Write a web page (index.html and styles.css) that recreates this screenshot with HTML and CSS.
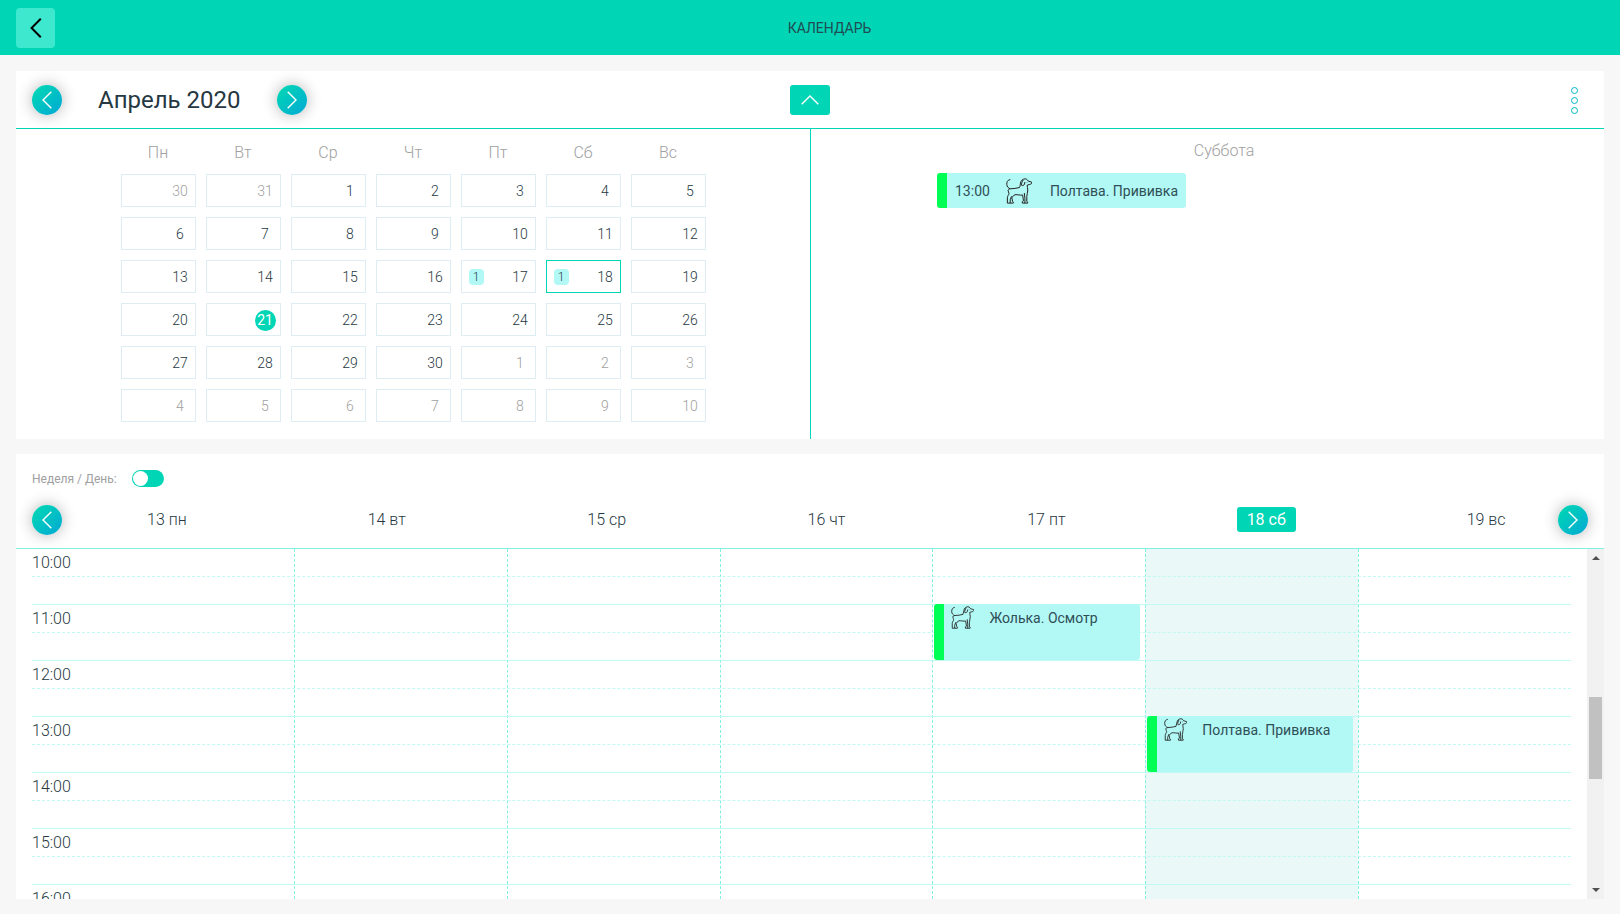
FILE: index.html
```
<!DOCTYPE html>
<html lang="ru">
<head>
  <meta charset="UTF-8">
  <meta name="viewport" content="width=device-width, initial-scale=1">
  <title>Календарь</title>
  <link rel="stylesheet" href="styles.css">
</head>
<body>

  <svg class="sprite" aria-hidden="true">
    <symbol id="icon-left" viewBox="0 0 10 18"><path d="M9.300 .7 1 9l8.300 8.300"/></symbol>
    <symbol id="icon-right" viewBox="0 0 10 18"><path d="M.7 .7 9 9 .7 17.300"/></symbol>
    <symbol id="icon-up" viewBox="0 0 18 10"><path d="M.7 9.300 9 1l8.300 8.300"/></symbol>
    <symbol id="icon-dog" viewBox="0 0 26 26">
      <path d="M4.300 1.500C1.500 2 .6 4 .8 6.500c.1 2.200 1.500 3.600 3.500 4.300 3.200-.3 6.500-.4 9.200-1.300C14.500 8 14 5.500 15 3.500 15.900 1.500 18.500.2 20.500 1.200c1 .5 1.300 1.500 1.600 1.800l3.600 1.200c.3 1.500-.9 2.200-2.300 2.300l-2.200.7c-.2 1.500.6 3 .6 4.800 0 2.500-1 4.200-1 6.500v5l.9.6v1h-5.300l-.2-1.500 1.300-.8-.9-5.800c-2.600.5-5-.6-7.600-.3-1.500 1-3 2-3.200 3.300l.8 3.400.7.7v1H1.400v-5.300C1.400 17.700 3 16.500 3 15.500c0-1-1-2-.9-3.100.1-.8.8-1.500 2.200-1.600"/>
      <path d="M17.300 2c-1.300 1.500-2 3.500-1.700 5.300 1.200.6 2.300.2 2.900-1.200l.4-2.100M18.300 15l.6 5.500v4.600M4.200 25v-3.200l1.300-3.500M21 4.200v.4"/>
    </symbol>
  </svg>

  <header class="topbar">
    <button type="button" class="back" aria-label="Назад"><svg class="chevron"><use href="#icon-left"/></svg></button>
    <h1>КАЛЕНДАРЬ</h1>
  </header>

  <main>
    <section class="panel month">
      <div class="month-header">
        <div class="month-nav">
          <button type="button" class="round" aria-label="Предыдущий месяц"><svg class="chevron"><use href="#icon-left"/></svg></button>
          <h2>Апрель 2020</h2>
          <button type="button" class="round" aria-label="Следующий месяц"><svg class="chevron"><use href="#icon-right"/></svg></button>
        </div>
        <button type="button" class="collapse" aria-label="Свернуть"><svg class="chevron-up"><use href="#icon-up"/></svg></button>
        <button type="button" class="more" aria-label="Меню"><i></i><i></i><i></i></button>
      </div>

      <div class="month-body">
        <div class="month-days">
          <table class="days">
            <thead>
              <tr><th>Пн</th><th>Вт</th><th>Ср</th><th>Чт</th><th>Пт</th><th>Сб</th><th>Вс</th></tr>
            </thead>
            <tbody>
              <tr>
                <td><button type="button" class="day other"><span>30</span></button></td>
                <td><button type="button" class="day other"><span>31</span></button></td>
                <td><button type="button" class="day"><span>1</span></button></td>
                <td><button type="button" class="day"><span>2</span></button></td>
                <td><button type="button" class="day"><span>3</span></button></td>
                <td><button type="button" class="day"><span>4</span></button></td>
                <td><button type="button" class="day"><span>5</span></button></td>
              </tr>
              <tr>
                <td><button type="button" class="day"><span>6</span></button></td>
                <td><button type="button" class="day"><span>7</span></button></td>
                <td><button type="button" class="day"><span>8</span></button></td>
                <td><button type="button" class="day"><span>9</span></button></td>
                <td><button type="button" class="day"><span>10</span></button></td>
                <td><button type="button" class="day"><span>11</span></button></td>
                <td><button type="button" class="day"><span>12</span></button></td>
              </tr>
              <tr>
                <td><button type="button" class="day"><span>13</span></button></td>
                <td><button type="button" class="day"><span>14</span></button></td>
                <td><button type="button" class="day"><span>15</span></button></td>
                <td><button type="button" class="day"><span>16</span></button></td>
                <td><button type="button" class="day"><b>1</b><span>17</span></button></td>
                <td><button type="button" class="day selected"><b>1</b><span>18</span></button></td>
                <td><button type="button" class="day"><span>19</span></button></td>
              </tr>
              <tr>
                <td><button type="button" class="day"><span>20</span></button></td>
                <td><button type="button" class="day today"><span>21</span></button></td>
                <td><button type="button" class="day"><span>22</span></button></td>
                <td><button type="button" class="day"><span>23</span></button></td>
                <td><button type="button" class="day"><span>24</span></button></td>
                <td><button type="button" class="day"><span>25</span></button></td>
                <td><button type="button" class="day"><span>26</span></button></td>
              </tr>
              <tr>
                <td><button type="button" class="day"><span>27</span></button></td>
                <td><button type="button" class="day"><span>28</span></button></td>
                <td><button type="button" class="day"><span>29</span></button></td>
                <td><button type="button" class="day"><span>30</span></button></td>
                <td><button type="button" class="day other"><span>1</span></button></td>
                <td><button type="button" class="day other"><span>2</span></button></td>
                <td><button type="button" class="day other"><span>3</span></button></td>
              </tr>
              <tr>
                <td><button type="button" class="day other"><span>4</span></button></td>
                <td><button type="button" class="day other"><span>5</span></button></td>
                <td><button type="button" class="day other"><span>6</span></button></td>
                <td><button type="button" class="day other"><span>7</span></button></td>
                <td><button type="button" class="day other"><span>8</span></button></td>
                <td><button type="button" class="day other"><span>9</span></button></td>
                <td><button type="button" class="day other"><span>10</span></button></td>
              </tr>
            </tbody>
          </table>
        </div>

        <div class="day-events">
          <h3>Суббота</h3>
          <div class="event">
            <time>13:00</time>
            <svg class="dog"><use href="#icon-dog"/></svg>
            <span>Полтава. Прививка</span>
          </div>
        </div>
      </div>
    </section>

    <section class="panel week">
      <div class="mode">
        <label for="mode">Неделя / День:</label>
        <input type="checkbox" id="mode" class="switch">
      </div>

      <div class="week-header">
        <button type="button" class="round prev" aria-label="Предыдущая неделя"><svg class="chevron"><use href="#icon-left"/></svg></button>
        <div><span>13 пн</span></div>
        <div><span>14 вт</span></div>
        <div><span>15 ср</span></div>
        <div><span>16 чт</span></div>
        <div><span>17 пт</span></div>
        <div><span class="current">18 сб</span></div>
        <div><span>19 вс</span></div>
        <button type="button" class="round next" aria-label="Следующая неделя"><svg class="chevron"><use href="#icon-right"/></svg></button>
      </div>

      <div class="week-body">
        <div class="schedule">
          <div class="columns">
            <div class="column"></div>
            <div class="column"></div>
            <div class="column"></div>
            <div class="column"></div>
            <div class="column"></div>
            <div class="column current"></div>
            <div class="column"></div>
          </div>
          <div class="hours">
            <div class="hour">10:00</div>
            <div class="hour">11:00</div>
            <div class="hour">12:00</div>
            <div class="hour">13:00</div>
            <div class="hour">14:00</div>
            <div class="hour">15:00</div>
            <div class="hour">16:00</div>
          </div>
          <div class="columns">
            <div class="event" style="--day: 5; --start: 1">
              <svg class="dog"><use href="#icon-dog"/></svg>
              <span>Жолька. Осмотр</span>
            </div>
            <div class="event" style="--day: 6; --start: 3">
              <svg class="dog"><use href="#icon-dog"/></svg>
              <span>Полтава. Прививка</span>
            </div>
          </div>
        </div>
        <div class="scrollbar">
          <i class="arrow-up"></i>
          <div class="track"><div class="thumb"></div></div>
          <i class="arrow-down"></i>
        </div>
      </div>
    </section>
  </main>

</body>
</html>
```
FILE: styles.css
```
* {
  box-sizing: border-box;
}

body {
  margin: 0;
  height: 100vh;
  display: flex;
  flex-direction: column;
  background: #f7f7f7;
  color: #263842;
  font-family: Roboto, sans-serif;
  font-size: 16px;
  font-weight: 300;
}

h1, h2, h3 {
  margin: 0;
  font-weight: 400;
}

button {
  padding: 0;
  border: none;
  font: inherit;
  color: inherit;
  cursor: pointer;
}

.sprite {
  position: absolute;
  width: 0;
  height: 0;
}

.topbar {
  display: flex;
  align-items: center;
  height: 55px;
  padding: 0 16px;
  background: #00d5b5;
}

.topbar h1 {
  flex: 1;
  color: #204c52;
  font-size: 14px;
  text-align: center;
}

.back {
  display: flex;
  align-items: center;
  justify-content: center;
  width: 39px;
  height: 40px;
  border-radius: 4px;
  background: #3de8cf;
  color: #000;
}

.chevron {
  width: 10px;
  height: 18px;
  fill: none;
  stroke: currentColor;
  stroke-width: 1.4;
}

.back .chevron {
  width: 12px;
  height: 20px;
  stroke-width: 1.8;
}

.chevron-up {
  width: 18px;
  height: 10px;
  fill: none;
  stroke: currentColor;
  stroke-width: 1.4;
}

.round {
  display: flex;
  align-items: center;
  justify-content: center;
  width: 30px;
  height: 30px;
  border-radius: 50%;
  background: linear-gradient(135deg, #00d5b5 10%, #00a8d5 100%);
  box-shadow: 0 0 15px rgba(0, 0, 0, 0.3);
  color: #fff;
}

main {
  flex: 1;
  min-height: 0;
  display: flex;
  flex-direction: column;
  gap: 15px;
  padding: 16px 16px 15px;
}

.panel {
  background: #fff;
}

/* Month */
.month-header {
  display: grid;
  grid-template-columns: 1fr auto 1fr;
  align-items: center;
  height: 58px;
  padding: 1px 16px 0;
  border-bottom: 1px solid #00d5b5;
}

.month-nav {
  display: flex;
  align-items: center;
  gap: 36px;
}

.month-nav h2 {
  font-size: 24px;
  line-height: 30px;
}

.collapse {
  display: flex;
  align-items: center;
  justify-content: center;
  width: 40px;
  height: 30px;
  border-radius: 3px;
  background: #00d5b5;
  color: #fff;
}

.more {
  justify-self: end;
  display: flex;
  flex-direction: column;
  gap: 3px;
  padding: 0 10px;
  background: none;
}

.more i {
  width: 7px;
  height: 7px;
  border: 1px solid #00b8c8;
  border-radius: 50%;
}

.month-body {
  display: flex;
}

.month-days {
  width: 50%;
  padding-bottom: 7px;
}

.days {
  margin: 0 auto;
  border-spacing: 10px;
}

.days th {
  height: 25px;
  padding: 2px 0 0;
  color: #a0a0a0;
  font-weight: 300;
}

.days td {
  padding: 0;
}

.day {
  display: flex;
  align-items: center;
  width: 75px;
  height: 33px;
  padding: 1px 4px 0 7px;
  border: 1px solid #deedf4;
  background: #fff;
  font-size: 14px;
}

.day span {
  width: 21px;
  margin-left: auto;
  border-radius: 50%;
  line-height: 21px;
  text-align: center;
}

.day b {
  width: 15px;
  border-radius: 4px;
  background: #b2f8f5;
  font-size: 12px;
  font-weight: 300;
  line-height: 16px;
}

.day.other {
  color: #a0a0a0;
}

.day.selected {
  border-color: #00d5b5;
}

.day.today span {
  background: #00d5b5;
  color: #fff;
  font-weight: 400;
}

.day-events {
  width: 50%;
  padding: 11px 93px 0 126px;
  border-left: 1px solid #00d5b5;
}

.day-events h3 {
  margin-bottom: 11px;
  color: #a0a0a0;
  font-size: 16px;
  font-weight: 300;
  line-height: 22px;
  text-align: center;
}

.event {
  display: flex;
  border-left: 10px solid #00ff55;
  border-radius: 3px;
  background: #b2f8f5;
  color: #2f4f57;
  font-size: 14px;
  font-weight: 400;
}

.dog {
  width: 26px;
  height: 26px;
  fill: none;
  stroke: #222;
  stroke-width: 1;
}

.day-events .event {
  align-items: center;
  width: max-content;
  height: 35px;
  padding: 0 8px;
}

.day-events .dog {
  margin: 0 18px 0 16px;
}

/* Week */
.week {
  flex: 1;
  min-height: 0;
  display: flex;
  flex-direction: column;
}

.mode {
  display: flex;
  align-items: center;
  gap: 15px;
  padding: 16px 16px 0;
  color: #a0a0a0;
  font-size: 12px;
  font-weight: 400;
}

.switch {
  appearance: none;
  width: 32px;
  height: 17px;
  margin: 0;
  padding: 1px;
  border-radius: 9px;
  background: #00d5b5;
  cursor: pointer;
}

.switch::before {
  content: "";
  display: block;
  width: 15px;
  height: 15px;
  border-radius: 50%;
  background: #fff;
}

.switch:checked::before {
  margin-left: auto;
}

.week-header {
  position: relative;
  display: flex;
  align-items: center;
  height: 62px;
  padding: 4px 8px 0 41px;
  border-bottom: 1px solid #80f0e0;
}

.week-header div {
  flex: 1;
  text-align: center;
}

.week-header span {
  display: inline-block;
  padding: 0 10px;
  border-radius: 3px;
  line-height: 25px;
}

.week-header .current {
  background: #00d5b5;
  color: #fff;
  font-weight: 400;
}

.week-header .round {
  position: absolute;
  top: 18px;
}

.prev {
  left: 16px;
}

.next {
  right: 16px;
}

.week-body {
  flex: 1;
  min-height: 0;
  display: flex;
}

.schedule {
  flex: 1;
  position: relative;
  margin: 0 16px;
  overflow: hidden;
}

.columns {
  position: absolute;
  inset: 0 0 0 49px;
  display: flex;
}

.column {
  flex: 1;
  border-left: 1px dashed #80f0e0;
}

.column:first-child {
  border-left-color: transparent;
}

.column.current {
  background: #eaf8f8;
}

.hours {
  position: relative;
}

.hour {
  height: 56px;
  border-bottom: 1px solid #c0faf2;
  line-height: 27px;
}

.hour::after {
  content: "";
  display: block;
  border-bottom: 1px dashed #c0faf2;
}

.columns .event {
  position: absolute;
  top: calc(var(--start) * 56px - 1px);
  left: calc((var(--day) - 1) * 100% / 7 + 2px);
  width: calc(100% / 7 - 7px);
  height: 56px;
  line-height: 28px;
}

.columns .dog {
  width: 23px;
  height: 23px;
  margin: 2px 15px 0 7px;
}

.scrollbar {
  display: flex;
  flex-direction: column;
  align-items: center;
  width: 17px;
  padding: 7px 0;
  background: #f1f1f1;
}

.track {
  flex: 1;
  width: 13px;
  margin: 6px 0;
}

/* the visible part of the day starts at 10:00 */
.thumb {
  height: 26%;
  margin-top: 131px;
  background: #c1c1c1;
}

.arrow-up, .arrow-down {
  border: 4px solid transparent;
}

.arrow-up {
  border-top: none;
  border-bottom-color: #505050;
}

.arrow-down {
  border-bottom: none;
  border-top-color: #505050;
}
```
